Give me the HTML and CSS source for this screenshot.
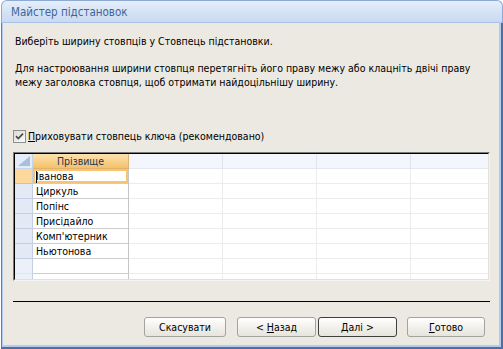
FILE: index.html
```html
<!DOCTYPE html>
<html lang="uk">
<head>
<meta charset="utf-8">
<title>Майстер підстановок</title>
<link rel="stylesheet" href="styles.css">
</head>
<body>
<div class="window">
  <div class="titlebar"><span class="title">Майстер підстановок</span></div>
  <div class="frame">
    <div class="content">
      <p class="intro">Виберіть ширину стовпців у Стовпець підстановки.</p>
      <p class="help">Для настроювання ширини стовпця перетягніть його праву межу або клацніть двічі праву<br>межу заголовка стовпця, щоб отримати найдоцільнішу ширину.</p>
      <label class="check">
        <span class="box"><svg width="11" height="11" viewBox="0 0 11 11"><path d="M2 5.2 L4.3 7.6 L9 2.6" fill="none" stroke="#4a4a4a" stroke-width="1.7"/></svg></span>
        <span class="check-label"><u>П</u>риховувати стовпець ключа (рекомендовано)</span>
      </label>
      <div class="grid-outer">
        <div class="grid">
          <div class="hd corner"><svg width="17" height="14" viewBox="0 0 17 14"><polygon points="3,12 15,12 15,2" fill="#a9bfe0"/></svg></div>
          <div class="hd name-hd">Прізвище</div>
          <div class="hd empty-hd"></div>
          <div class="hd empty-hd"></div>
          <div class="hd empty-hd"></div>
          <div class="hd empty-hd last"></div>

          <div class="sel active-sel"></div>
          <div class="cell name active"><span class="caret"></span>Іванова</div>
          <div class="cell e"></div><div class="cell e"></div><div class="cell e"></div><div class="cell e last"></div>

          <div class="sel"></div>
          <div class="cell name">Циркуль</div>
          <div class="cell e"></div><div class="cell e"></div><div class="cell e"></div><div class="cell e last"></div>

          <div class="sel"></div>
          <div class="cell name">Попінс</div>
          <div class="cell e"></div><div class="cell e"></div><div class="cell e"></div><div class="cell e last"></div>

          <div class="sel"></div>
          <div class="cell name">Присідайло</div>
          <div class="cell e"></div><div class="cell e"></div><div class="cell e"></div><div class="cell e last"></div>

          <div class="sel"></div>
          <div class="cell name">Комп'ютерник</div>
          <div class="cell e"></div><div class="cell e"></div><div class="cell e"></div><div class="cell e last"></div>

          <div class="sel"></div>
          <div class="cell name">Ньютонова</div>
          <div class="cell e"></div><div class="cell e"></div><div class="cell e"></div><div class="cell e last"></div>

          <div class="sel blank"></div>
          <div class="cell name"></div>
          <div class="cell e"></div><div class="cell e"></div><div class="cell e"></div><div class="cell e last"></div>

          <div class="sel blank"></div>
          <div class="cell name"></div>
          <div class="cell e"></div><div class="cell e"></div><div class="cell e"></div><div class="cell e last"></div>
        </div>
      </div>
      <div class="separator"></div>
      <div class="buttons">
        <button class="btn cancel">Скасувати</button>
        <button class="btn back">&lt; <u>Н</u>азад</button>
        <button class="btn next default"><u>Д</u>алі &gt;</button>
        <button class="btn finish"><u>Г</u>отово</button>
      </div>
    </div>
  </div>
</div>
</body>
</html>
```

FILE: styles.css
```css
* { box-sizing: border-box; }

html, body {
  margin: 0;
  padding: 0;
  background: #ffffff;
}

body {
  width: 503px;
  height: 349px;
  overflow: hidden;
  font-family: "DejaVu Sans Condensed", "Liberation Sans", sans-serif;
  font-size: 10.5px;
  color: #000;
}

.window {
  width: 503px;
  height: 349px;
  display: flex;
  flex-direction: column;
}

.titlebar {
  height: 23px;
  margin-left: 1px;
  border: 1px solid #8eaad3;
  border-bottom: 1px solid #a8c1e4;
  border-radius: 6px 6px 0 0;
  background: linear-gradient(#e6eefa, #d6e3f5 50%, #c8daf2);
  display: flex;
  align-items: center;
  padding-left: 9px;
}

.title {
  font-family: "DejaVu Sans Condensed", "Liberation Sans", sans-serif;
  font-size: 11.5px;
  color: #3e649c;
}

.frame {
  flex: 1;
  margin-left: 1px;
  border-left: 1px solid #5d7fb3;
  border-right: 2px solid #4e6fa4;
  border-bottom: 2px solid #4e6fa4;
  display: flex;
}

.content {
  flex: 1;
  border-left: 1px solid #b3cbec;
  border-right: 2px solid #b3cbec;
  border-bottom: 2px solid #b3cbec;
  background: #ece9e2;
  padding: 11px 0 0 10px;
}

.intro, .help {
  margin: 0 0 0 2px;
  line-height: 14px;
}

.help {
  margin-top: 13px;
}

.check {
  display: flex;
  align-items: center;
  margin-top: 40px;
  height: 14px;
}

.box {
  width: 13px;
  height: 13px;
  border: 1px solid #8f8f8f;
  background: linear-gradient(135deg, #dcdcd4, #fbfbf9);
  display: flex;
  align-items: center;
  justify-content: center;
}

.check-label {
  margin-left: 2px;
}

.grid-outer {
  margin-top: 9px;
  width: 477px;
  height: 129px;
  border: 1px solid;
  border-color: #7a7a7a #f4f4f4 #f4f4f4 #7a7a7a;
}

.grid {
  height: 100%;
  overflow: hidden;
  border: 1px solid;
  border-color: #000 #e2e0d9 #e2e0d9 #000;
  background: #fff;
  display: grid;
  grid-template-columns: 18px 96px 94px 94px 94px 1fr;
  grid-auto-rows: 15px;
}

.hd {
  border-right: 1px solid #dfe4ee;
  border-bottom: 1px solid #e4e8f1;
  background: #f4f6fd;
}

.hd.last { border-right: none; }

.corner {
  background: #e5ecf8;
  border-right: 1px solid #c7d3e6;
  border-bottom: 1px solid #c7d3e6;
  display: flex;
}

.name-hd {
  background: linear-gradient(#fbe2b0, #f8d28b 50%, #f3c26a);
  border-right: 1px solid #d9b37a;
  border-bottom: 1px solid #e3b26a;
  color: #1f3556;
  text-align: center;
  line-height: 14px;
}

.sel {
  background: #e3eaf6;
  border-right: 1px solid #c4cfe2;
  border-bottom: 1px solid #c4cfe2;
}

.active-sel {
  background: #fcd89c;
  border-bottom-color: #e6bf7c;
}

.sel.blank {
  background: #ebf0f9;
  border-bottom-color: #dfe5f0;
}

.cell {
  border-right: 1px solid #ececec;
  border-bottom: 1px solid #ececec;
  line-height: 14px;
  white-space: nowrap;
}

.cell.last { border-right: none; }

.cell.name {
  border-right: 1px solid #c6c6c6;
  border-bottom: 1px solid #cdcdcd;
  padding-left: 3px;
}

.cell.active {
  box-shadow: inset 0 0 0 2px #f9c374;
  position: relative;
}

.caret {
  position: absolute;
  left: 3px;
  top: 2px;
  width: 1px;
  height: 12px;
  background: #000;
}

.separator {
  margin-top: 20px;
  width: 477px;
  height: 1px;
  background: #000;
}

.buttons {
  display: flex;
  margin-top: 15px;
  padding-left: 131px;
}

.btn {
  height: 20px;
  padding: 0;
  font-family: inherit;
  font-size: 10.5px;
  color: #000;
  border: 1px solid #a3a3a0;
  border-radius: 3px;
  background: linear-gradient(#ffffff, #f3f2ee 45%, #e6e4dc);
}

.btn.default {
  border-color: #3f3f3f;
}

.cancel { width: 82px; }
.back { width: 79px; margin-left: 11px; }
.next { width: 79px; margin-left: 2px; }
.finish { width: 78px; margin-left: 10px; }
```
